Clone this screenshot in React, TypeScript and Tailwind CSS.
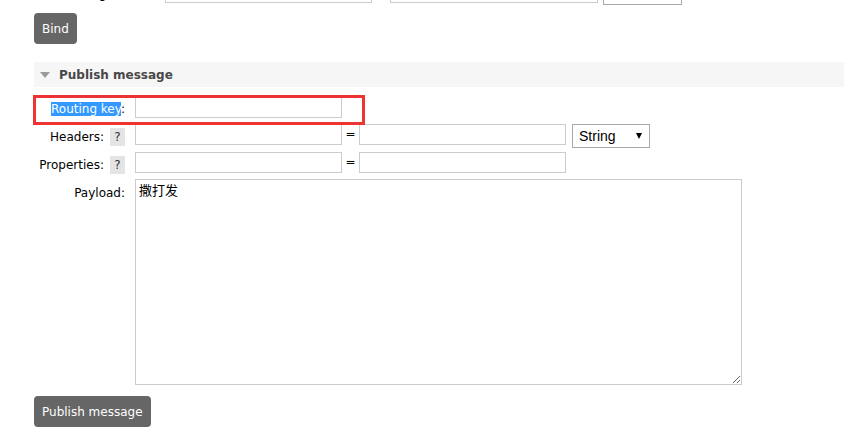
import React from "react";

const font = { fontFamily: '"DejaVu Sans", Verdana, sans-serif' };

function Input({ w = "w-[207px]" }: { w?: string }) {
  return <div className={`${w} h-[21px] border border-[#cccccc] bg-white shrink-0`} />;
}

function Help() {
  return (
    <span className="ml-[6px] mt-[4px] w-[15px] h-[18px] bg-[#e4e4e4] text-[#333] text-[12px] leading-[18px] text-center inline-block shrink-0">
      ?
    </span>
  );
}

function FakeSelect({ w }: { w: string }) {
  return (
    <div
      className={`${w} h-[24px] border border-[#a9a9a9] bg-white flex items-center justify-between pl-[6px] pr-[7px] shrink-0`}
      style={{ fontFamily: '"Liberation Sans", Arial, sans-serif' }}
    >
      <span className="text-[14px] text-black leading-none">String</span>
      <span className="w-0 h-0 border-l-[3px] border-r-[3px] border-t-[6px] border-l-transparent border-r-transparent border-t-black" />
    </div>
  );
}

export default function App() {
  return (
    <div className="w-[844px] h-[441px] overflow-hidden bg-white relative text-[12px] text-black" style={font}>
      {/* cut-off arguments row */}
      <div className="flex items-start mt-[-18px] h-[21px] pl-[34px]">
        <div className="w-[122px] text-right pt-[4px] leading-[17px]">Arguments:</div>
        <div className="ml-[9px]">
          <Input w="w-[207px]" />
        </div>
        <div className="w-[18px]" />
        <Input w="w-[208px]" />
        <div className="ml-[5px]">
          <div className="w-[79px] h-[23px] border border-[#a9a9a9] bg-white" />
        </div>
      </div>

      <div className="pl-[34px]">
        <button className="mt-[10px] h-[31px] px-[8px] bg-[#666666] text-white rounded-[4px] text-[12px] leading-none">
          Bind
        </button>
      </div>

      {/* section header */}
      <div className="ml-[34px] mt-[18px] h-[25px] bg-[#f6f6f6] flex items-center">
        <span className="ml-[6px] w-0 h-0 border-l-[5px] border-r-[5px] border-t-[6px] border-l-transparent border-r-transparent border-t-[#9a9a9a]" />
        <span className="ml-[9px] font-bold text-[12px] text-[#484848]">Publish message</span>
      </div>

      {/* form */}
      <div className="pl-[34px] mt-[10px] flex flex-col">
        {/* routing key */}
        <div className="flex items-start h-[21px]">
          <div className="w-[91px] text-right pt-[4px] leading-[17px]">
            <span className="bg-[#3399ff] text-white">Routing key</span>:
          </div>
          <div className="ml-[10px]">
            <Input />
          </div>
        </div>

        {/* headers */}
        <div className="flex items-start h-[22px] mt-[6px]">
          <div className="w-[91px] flex justify-end items-start">
            <span className="pt-[5px] leading-[17px]">Headers:</span>
            <Help />
          </div>
          <div className="ml-[10px] flex items-start">
            <Input />
            <div className="w-[17px] text-center pt-[2px] leading-[17px]">=</div>
            <Input />
            <div className="ml-[6px]">
              <FakeSelect w="w-[78px]" />
            </div>
          </div>
        </div>

        {/* properties */}
        <div className="flex items-start h-[21px] mt-[6px]">
          <div className="w-[91px] flex justify-end items-start">
            <span className="pt-[5px] leading-[17px]">Properties:</span>
            <Help />
          </div>
          <div className="ml-[10px] flex items-start">
            <Input />
            <div className="w-[17px] text-center pt-[2px] leading-[17px]">=</div>
            <Input />
          </div>
        </div>

        {/* payload */}
        <div className="flex items-start mt-[6px]">
          <div className="w-[91px] text-right pt-[6px] leading-[17px]">Payload:</div>
          <div className="ml-[10px]">
            <textarea
              readOnly
              defaultValue="撒打发"
              className="block w-[607px] h-[206px] border border-[#cccccc] bg-white px-[3px] py-[2px] text-[13px] leading-[16px] outline-none resize"
              style={{ fontFamily: '"Noto Sans CJK SC", "DejaVu Sans", sans-serif' }}
            />
          </div>
        </div>

        <div>
          <button className="mt-[11px] h-[31px] px-[8px] bg-[#666666] text-white rounded-[4px] text-[12px] leading-none">
            Publish message
          </button>
        </div>
      </div>

      {/* red annotation box */}
      <div className="absolute left-[33px] top-[95px] w-[332px] h-[30px] border-[3px] border-[#ee3333] pointer-events-none" />
    </div>
  );
}
